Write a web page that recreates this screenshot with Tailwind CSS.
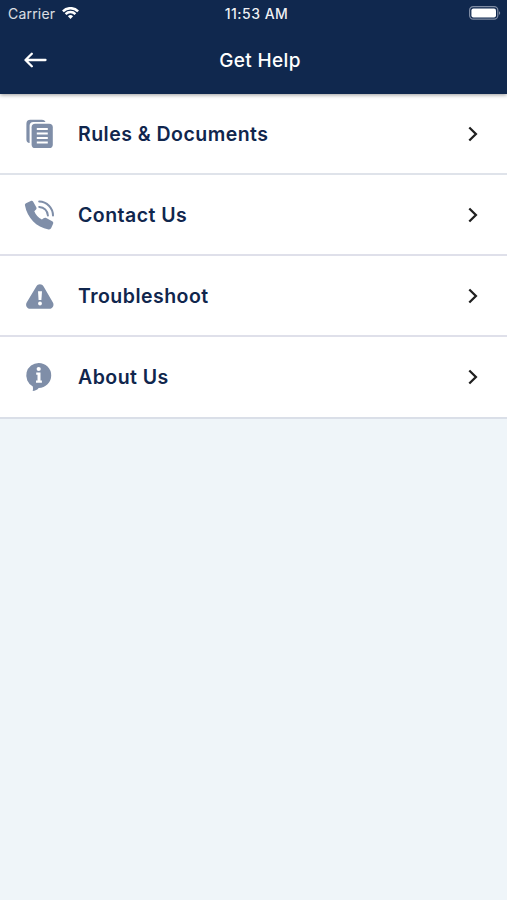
<!DOCTYPE html>
<html lang="en">
<head>
  <meta charset="UTF-8" />
  <meta name="viewport" content="width=device-width, initial-scale=1.0"/>
  <title>Get Help</title>
  <script src="https://cdn.jsdelivr.net/npm/@tailwindcss/browser@4"></script>
</head>
<body class="min-h-screen bg-[#eff5f9] font-['Inter',sans-serif] text-[#10264d]">

  <header class="relative h-[94px] bg-[#10284e] text-white shadow-[0_1px_4px_rgba(0,0,0,0.4)]">
    <!-- status bar -->
    <div class="grid grid-cols-3 items-center h-[26px] pl-2 pr-1.5">
      <div class="flex items-center gap-[7px]">
        <span class="text-[14px] tracking-[0.2px] text-white/85">Carrier</span>
        <svg class="w-[17px] h-3" viewBox="0 0 17 12" fill="none" stroke="currentColor" stroke-width="2.5">
          <path d="M.9 4.3a10.8 10.8 0 0 1 15.2 0M3.6 7.1a6.9 6.9 0 0 1 9.8 0"/>
          <path d="M8.5 12 5.9 9.3a3.7 3.7 0 0 1 5.2 0z" fill="currentColor" stroke="none"/>
        </svg>
      </div>
      <span class="pl-1 text-center text-[14px] font-medium tracking-[0.5px] whitespace-nowrap text-white/95">11:53 AM</span>
      <svg class="w-8 h-4 justify-self-end" viewBox="0 0 32 16">
        <rect x=".6" y="1.6" width="28.2" height="12.6" rx="3.6" fill="none" stroke="#7f8ca4" stroke-width="1.2"/>
        <rect x="2.4" y="3.4" width="24.6" height="9" rx="2" fill="#fff"/>
        <path d="M30 6.2v3.6c1.6-.5 1.6-3.1 0-3.6z" fill="#7f8ca4"/>
      </svg>
    </div>

    <!-- title bar -->
    <div class="grid grid-cols-[1fr_auto_1fr] items-center h-[68px] px-6">
      <svg class="w-[23px] h-4" viewBox="0 0 23 16" fill="none" stroke="currentColor" stroke-width="2.3" stroke-linecap="round" stroke-linejoin="round">
        <path d="M21.5 8H1.7M7.8 1.7 1.5 8l6.3 6.3"/>
      </svg>
      <h1 class="pl-[13px] pt-0.5 text-[19px] font-medium tracking-[0.35px]">Get Help</h1>
    </div>
  </header>

  <main class="bg-white">
    <a href="#" class="flex items-center h-[81px] border-b-2 border-[#dfe3ea] pl-6 pr-7">
      <svg class="w-8 h-8" viewBox="0 0 32 32">
        <path d="M5.6 25A3.6 3.6 0 0 1 2.4 21.5V5.7A4 4 0 0 1 6.4 1.7H18a4 4 0 0 1 3.6 2.3H9.4a3.8 3.8 0 0 0-3.8 3.8z" fill="#7f8ea8"/>
        <rect x="7.6" y="5.8" width="21.2" height="24.2" rx="3.6" fill="#7f8ea8"/>
        <path d="M12.8 11.1h11M12.8 15.6h11M12.8 20.1h11M12.8 24.6h11" stroke="#fff" stroke-width="2"/>
      </svg>
      <span class="flex-1 pl-[22px] pt-0.5 text-[19.5px] font-semibold tracking-[0.47px]">Rules &amp; Documents</span>
      <svg class="w-3 h-4" viewBox="0 0 12 16" fill="none" stroke="#202020" stroke-width="2.3"><path d="m2.3 1.5 6.6 6.5-6.6 6.5"/></svg>
    </a>

    <a href="#" class="flex items-center h-[81px] border-b-2 border-[#dfe0ea] pl-6 pr-7">
      <svg class="w-8 h-8" viewBox="0 0 32 32">
        <path d="M2 4.2 6.7 1.9c1-.5 2-.2 2.500.8l3.100 5.500c.5 1 .3 1.900-.5 2.600l-1.500 1.500c1.300 3.500 4 6.400 7.600 8.200l1.700-1.300c.8-.6 1.700-.7 2.600-.2l6 3.300c1 .6 1.300 1.500.9 2.500L27.200 29c-.5 1.100-1.400 1.600-2.600 1.400C12.300 28.200 3.200 18.600 1 6.400.8 5.400 1.100 4.700 2 4.200z" fill="#7f8ea8"/>
        <path d="M15.2 7.900c4.800.3 8.300 3.800 8.700 8.600M15.200 2.600C22.900 2.700 28.900 8.800 29 16.500" fill="none" stroke="#7f8ea8" stroke-width="2" stroke-linecap="round"/>
      </svg>
      <span class="flex-1 pl-[22px] pt-0.5 text-[19.5px] font-semibold tracking-[0.47px]">Contact Us</span>
      <svg class="w-3 h-4" viewBox="0 0 12 16" fill="none" stroke="#202020" stroke-width="2.3"><path d="m2.3 1.5 6.6 6.5-6.6 6.5"/></svg>
    </a>

    <a href="#" class="flex items-center h-[81px] border-b-2 border-[#dfe0ea] pl-6 pr-7">
      <svg class="w-8 h-8" viewBox="0 0 32 32">
        <path d="M12.3 6.4c1.6-2.9 5.7-2.900 7.300 0l9.300 16.100c1.600 2.900-.2 6.300-3.500 6.300H6.200c-3.300 0-5.100-3.400-3.500-6.300z" fill="#7f8ea8"/>
        <path d="M14 11.2h4l-.6 8.800h-2.800z" fill="#fff"/>
        <circle cx="16" cy="23.5" r="1.9" fill="#fff"/>
      </svg>
      <span class="flex-1 pl-[22px] pt-0.5 text-[19.5px] font-semibold tracking-[0.47px]">Troubleshoot</span>
      <svg class="w-3 h-4" viewBox="0 0 12 16" fill="none" stroke="#202020" stroke-width="2.3"><path d="m2.3 1.5 6.6 6.5-6.6 6.5"/></svg>
    </a>

    <a href="#" class="flex items-center h-[82px] border-b-2 border-[#dadfe8] pl-6 pr-7">
      <svg class="w-8 h-8" viewBox="0 0 32 32">
        <path d="M14.7 1.900a12.500 12.500 0 0 1 0 25c-1.200 1.600-3.500 2.900-6.100 3.200.5-1.300.5-3 .2-4.700A12.500 12.500 0 0 1 14.700 1.900z" fill="#7f8ea8"/>
        <circle cx="14.7" cy="8" r="2.1" fill="#fff"/>
        <path d="M12.200 11.500h4.300v8h1.400v2.200h-5.900v-2.200h1.500v-5.800h-1.300z" fill="#fff"/>
      </svg>
      <span class="flex-1 pl-[22px] pt-0.5 text-[19.5px] font-semibold tracking-[0.47px]">About Us</span>
      <svg class="w-3 h-4" viewBox="0 0 12 16" fill="none" stroke="#202020" stroke-width="2.3"><path d="m2.3 1.5 6.6 6.5-6.6 6.5"/></svg>
    </a>
  </main>

</body>
</html>
